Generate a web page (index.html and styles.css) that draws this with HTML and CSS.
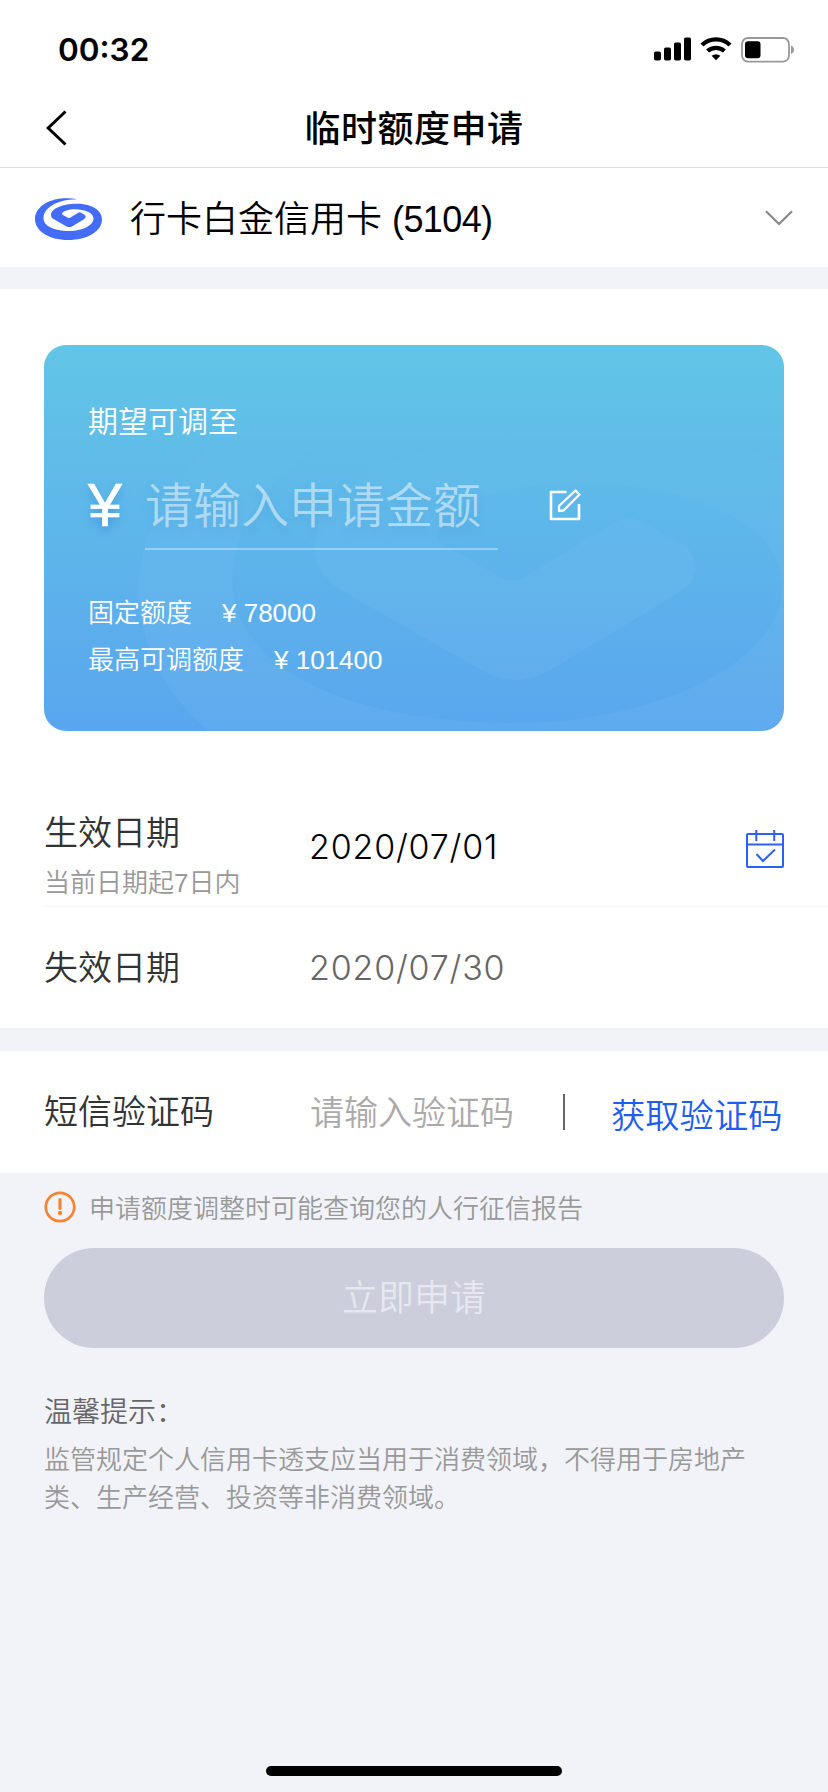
FILE: index.html
```html
<!DOCTYPE html>
<html lang="zh-CN">
<head>
<meta charset="utf-8">
<title>临时额度申请</title>
<link rel="stylesheet" href="styles.css">
</head>
<body>
<svg class="defs" width="0" height="0" aria-hidden="true">
  <linearGradient id="fade" x1="0" y1="0" x2="0" y2="1"><stop offset=".1" stop-color="#fff" stop-opacity="0"/><stop offset=".5" stop-color="#fff" stop-opacity=".04"/><stop offset="1" stop-color="#fff" stop-opacity=".045"/></linearGradient>
  <symbol id="swirl" viewBox="0 0 67 42">
    <path d="M42 1.200C38 .3 33 0 28.500 .2C12 1.200 0 10 0 21C0 33 14 42 33 42C52 42 67 33.500 67 21.500C67 12 56 5.800 42 5.800C28 5.800 16 10.500 16 17C16 19 17 20 18.500 21L31.500 28.400Q34.300 29.800 37 28.400L49 21.200Q52 19 49.500 16.800L45.500 14.600Q44.400 14.100 43.300 14.700L35 19.800Q34 20.300 33 19.800L27.500 16.800Q26.500 16 27.500 14.800C29.500 12.500 34 11.200 40 11.200C50 11.200 58.500 14.800 58.500 20.500C58.500 27.500 47 33 34 33C19 33 8.500 28 8.500 20C8.500 11 20 1.500 42 1.200Z"/>
  </symbol>
</svg>
<div class="screen">
  <header class="top">
    <div class="status">
      <span class="clock">00:32</span>
      <div class="indicators">
        <svg width="37" height="24" viewBox="0 0 37 24"><rect x="0" y="14.500" width="7" height="9" rx="1.800"/><rect x="10" y="10.500" width="7" height="13" rx="1.800"/><rect x="20" y="5.500" width="7" height="18" rx="1.800"/><rect x="30" y=".5" width="7" height="23" rx="1.800"/></svg>
        <svg class="wifi" width="32" height="24" viewBox="0 0 32 24"><path d="M2 8C10 .4 22 .4 30 8M7.600 14C12.500 9.700 19.500 9.700 24.400 14" fill="none" stroke="#000" stroke-width="4.300"/><path d="M11.600 18.800Q16 15.500 20.400 18.800L16 23.300Z"/></svg>
        <svg class="battery" width="54" height="26" viewBox="0 0 54 26"><rect x="1" y="1" width="47" height="23.600" rx="6" fill="none" stroke="#999" stroke-width="1.800"/><rect x="4" y="4.300" width="15.500" height="17" rx="3"/><path d="M50 8.500C54 10 54 15.500 50 17Z" fill="#999"/></svg>
      </div>
    </div>
    <div class="nav">
      <svg class="back" width="24" height="38" viewBox="0 0 24 38"><path d="M20.500 2.500L3.200 19L20.500 35.500" fill="none" stroke="#000" stroke-width="3"/></svg>
      <h1 class="title">临时额度申请</h1>
    </div>
  </header>

  <div class="account">
    <svg class="logo" width="67" height="42"><use href="#swirl"/></svg>
    <span class="account-name">行卡白金信用卡 <span class="tail">(5104)</span></span>
    <svg class="chevron" width="28" height="16" viewBox="0 0 28 16"><path d="M1 1.200L14 14L27 1.200" fill="none" stroke="#888" stroke-width="2.200"/></svg>
  </div>

  <main class="limit">
    <section class="card">
      <svg class="watermark" width="737" height="462"><use href="#swirl"/></svg>
      <p class="card-label">期望可调至</p>
      <div class="amount">
        <span class="yen">¥</span>
        <span class="amount-input">请输入申请金额</span>
        <svg class="edit" width="34" height="34" viewBox="0 0 34 34" fill="none" stroke="#fff" stroke-width="2.600" stroke-linejoin="round"><path d="M18.500 4H3V31H31V16"/><path d="M11 23V18L27.500 2.500L31.500 6.500L15.500 22.500Z" stroke-width="2.300"/></svg>
      </div>
      <p class="card-line">固定额度<span class="sum">¥ 78000</span></p>
      <p class="card-line">最高可调额度<span class="sum">¥ 101400</span></p>
    </section>
  </main>

  <section class="rows">
    <div class="row start">
      <div class="field"><span class="label">生效日期</span><span class="hint">当前日期起7日内</span></div>
      <span class="date">2020/07/01</span>
      <svg class="calendar" width="38" height="38" viewBox="0 0 38 38" fill="none" stroke="#2b63f0" stroke-width="2"><rect x="1" y="4" width="36" height="33" rx="1"/><path d="M1 14.500H37M10.300 0V11M28.200 0V11"/><path d="M10.500 24L17 31L29 19.500"/></svg>
    </div>
    <div class="row end">
      <span class="label field">失效日期</span>
      <span class="date muted">2020/07/30</span>
    </div>
  </section>

  <section class="sms">
    <span class="label field">短信验证码</span>
    <span class="code-input">请输入验证码</span>
    <span class="bar"></span>
    <span class="get-code">获取验证码</span>
  </section>

  <footer class="bottom">
    <div class="notice">
      <svg width="32" height="32" viewBox="0 0 32 32"><circle cx="16" cy="16" r="14.200" fill="none" stroke="#f58433" stroke-width="2.700"/><path d="M16 8.500V17.500" stroke="#f58433" stroke-width="3.200" stroke-linecap="round"/><circle cx="16" cy="22" r="2.200" fill="#f58433"/></svg>
      <span>申请额度调整时可能查询您的人行征信报告</span>
    </div>
    <div class="submit">立即申请</div>
    <p class="tips-title">温馨提示：</p>
    <p class="tips">监管规定个人信用卡透支应当用于消费领域，不得用于房地产类、生产经营、投资等非消费领域。</p>
    <div class="home"></div>
  </footer>
</div>
</body>
</html>
```
FILE: styles.css
```css
* { box-sizing: border-box; margin: 0; padding: 0; }
body {
  width: 828px;
  background: #f2f3f8;
  font-family: "Liberation Sans", "Noto Sans CJK SC", sans-serif;
  font-weight: 350;
  color: #333;
}
.defs { position: absolute; }
svg { display: block; flex: none; }
.screen { display: flex; flex-direction: column; height: 1792px; overflow: hidden; }

.top { height: 168px; background: #fff; border-bottom: 1px solid #ddd; }
.status { display: flex; justify-content: space-between; height: 88px; padding: 30px 33px 0 58px; }
.clock { font: 600 31.500px/40px Inter, sans-serif; color: #000; }
.indicators { display: flex; align-items: flex-start; padding-top: 7px; }
.wifi { margin-left: 9px; }
.battery { margin-left: 9px; }
.nav { display: flex; align-items: center; height: 80px; padding: 0 46px 0 45px; }
.title { flex: 1; margin: -4px 23px 0 0; text-align: center; font-size: 36px; font-weight: 500; letter-spacing: .5px; color: #000; }

.account { display: flex; align-items: center; height: 99px; padding: 0 35px; background: #fff; }
.logo { fill: #436df8; margin-top: 3px; }
.account-name { flex: 1; margin: -3px 0 0 28px; font-size: 36px; color: #000; }
.tail { letter-spacing: -.6px; }

.limit { margin-top: 22px; padding: 56px 44px 0; height: 442px; background: #fff; }
.card {
  position: relative;
  height: 386px;
  padding: 55px 44px 0;
  border-radius: 22px;
  overflow: hidden;
  background: linear-gradient(#62c5e6, #59a6ee);
  color: #fff;
}
.watermark { position: absolute; left: 95px; top: 15px; fill: url(#fade); }
.card-label { position: relative; font-size: 30px; line-height: 44px; }
.amount { position: relative; display: flex; align-items: flex-start; height: 107px; padding-top: 22px; }
.yen { width: 57px; padding: 1px 0 0; font: 400 61px/76px "Liberation Sans", sans-serif; -webkit-text-stroke: .6px #fff; text-shadow: 0 6px 8px rgba(40, 110, 200, .4); }
.amount-input { width: 353px; height: 84px; padding-top: 3px; border-bottom: 2px solid rgba(255, 255, 255, .35); font-size: 48px; line-height: 76px; color: rgba(255, 255, 255, .5); text-shadow: 0 6px 8px rgba(40, 110, 200, .12); }
.edit { margin: 22px 0 0 50px; }
.card-line { position: relative; font-size: 26px; line-height: 47px; }
.card-label + .amount + .card-line { margin-top: 39px; }
.sum { margin-left: 30px; }

.rows { height: 297px; background: #fff; }
.row { display: flex; margin-left: 44px; padding-right: 44px; }
.start { height: 176px; border-bottom: 1px solid #f5f5f7; }
.end { height: 121px; align-items: center; }
.field { width: 266px; flex: none; }
.start .field { display: flex; flex-direction: column; padding-top: 77px; }
.label { font-size: 34px; line-height: 50px; }
.hint { font-size: 26px; line-height: 50px; color: #999; }
.date { flex: 1; margin-left: -1px; font: 350 34px/50px Inter, sans-serif; letter-spacing: .8px; color: #000; }
.start .date { margin-top: 91px; }
.muted { margin-top: 1px; color: #666; }
.calendar { margin-top: 99px; }

.sms { display: flex; align-items: center; height: 122px; margin-top: 23px; padding: 0 44px; background: #fff; }
.code-input { width: 253px; margin-top: -4px; font-size: 34px; color: #aaa; }
.bar { width: 2px; height: 36px; background: #666; }
.get-code { margin: 1px 0 0 46px; font-size: 34.300px; white-space: nowrap; color: #1f5df2; }

.bottom { display: flex; flex: 1; flex-direction: column; padding: 18px 44px 0; }
.notice { display: flex; align-items: center; gap: 13px; height: 32px; font-size: 26px; color: #999; }
.notice span { margin-top: -1px; }
.submit { height: 100px; margin-top: 25px; border-radius: 50px; background: #cccedb; color: #e6e7f0; font-size: 36px; line-height: 101px; text-align: center; }
.tips-title { margin-top: 43px; font-size: 28px; line-height: 44px; color: #666; }
.tips { margin-top: 6px; font-size: 26px; line-height: 38px; color: #999; }
.home { width: 296px; height: 10px; margin: auto auto 16px; border-radius: 5px; background: #000; }
```
